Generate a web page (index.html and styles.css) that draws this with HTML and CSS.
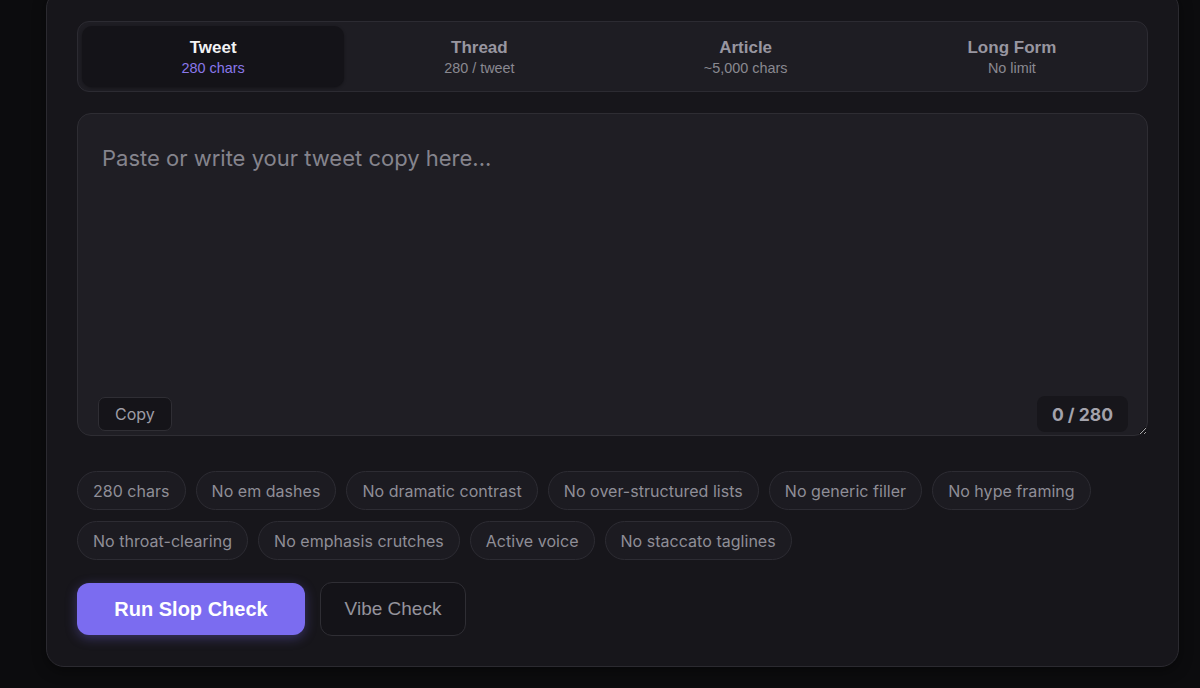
FILE: index.html
```html
<!DOCTYPE html>
<html>
<head>
<meta charset="utf-8">
<link rel="stylesheet" href="styles.css">
</head>
<body>
<div class="card">
  <div class="tabs">
    <button class="tab active"><span class="tab-title">Tweet</span><span class="tab-sub">280 chars</span></button>
    <button class="tab"><span class="tab-title">Thread</span><span class="tab-sub">280 / tweet</span></button>
    <button class="tab"><span class="tab-title">Article</span><span class="tab-sub">~5,000 chars</span></button>
    <button class="tab"><span class="tab-title">Long Form</span><span class="tab-sub">No limit</span></button>
  </div>
  <div class="editor">
    <textarea class="input" placeholder="Paste or write your tweet copy here..."></textarea>
    <button class="copy">Copy</button>
    <span class="count">0 / 280</span>
  </div>
  <div class="chips">
    <span class="chip">280 chars</span>
    <span class="chip">No em dashes</span>
    <span class="chip">No dramatic contrast</span>
    <span class="chip">No over-structured lists</span>
    <span class="chip">No generic filler</span>
    <span class="chip">No hype framing</span>
    <span class="chip">No throat-clearing</span>
    <span class="chip">No emphasis crutches</span>
    <span class="chip">Active voice</span>
    <span class="chip">No staccato taglines</span>
  </div>
  <div class="actions">
    <button class="primary">Run Slop Check</button>
    <button class="secondary">Vibe Check</button>
  </div>
</div>
</body>
</html>
```
FILE: styles.css
```css
* { box-sizing: border-box; }
html, body { margin: 0; padding: 0; }
body {
  background: #0c0c0e;
  height: 688px;
  overflow: hidden;
  font-family: Inter, "Liberation Sans", sans-serif;
}
.card {
  margin-top: -10px;
  margin-left: 46px;
  width: 1133px;
  background: #17161b;
  border: 1px solid #2b2a30;
  border-radius: 18px;
  padding: 30px 30px 30px 30px;
  box-shadow: 0 4px 14px rgba(0,0,0,0.4);
}
.tabs {
  display: grid;
  grid-template-columns: repeat(4, 1fr);
  gap: 4px;
  padding: 4px;
  background: #1e1d23;
  border: 1px solid #2c2b32;
  border-radius: 12px;
}
.tab {
  display: flex;
  flex-direction: column;
  align-items: center;
  justify-content: center;
  height: 61px;
  background: transparent;
  border: none;
  border-radius: 10px;
  font-family: "Liberation Sans", Arial, sans-serif;
  padding: 2px 0 0 0;
  gap: 1px;
}
.tab.active {
  background: #141318;
  box-shadow: 0 1px 3px rgba(0,0,0,0.35);
}
.tab-title {
  font-size: 17px;
  font-weight: 700;
  color: #9896a0;
  line-height: 20px;
}
.tab-sub {
  font-size: 14.4px;
  color: #8a8991;
  line-height: 18px;
}
.tab.active .tab-title { color: #f2f2f4; }
.tab.active .tab-sub { color: #8a78ea; }
.editor {
  position: relative;
  margin-top: 21px;
}
.input {
  display: block;
  width: 100%;
  height: 323px;
  background: #1f1e24;
  border: 1px solid #2e2d33;
  border-radius: 14px;
  padding: 31px 24px 29px;
  font-family: Inter, "Liberation Sans", sans-serif;
  font-size: 22px;
  color: #e0e0e4;
  resize: vertical;
  outline: none;
}
.input::placeholder { color: #85848d; }
.copy {
  position: absolute;
  left: 21px;
  bottom: 5px;
  height: 34px;
  padding: 0 16px;
  background: #151419;
  border: 1px solid #2f2e34;
  border-radius: 7px;
  color: #9e9da6;
  font-family: Inter, "Liberation Sans", sans-serif;
  font-size: 16px;
}
.count {
  position: absolute;
  right: 20px;
  bottom: 4px;
  height: 36px;
  padding: 0 15px;
  display: flex;
  align-items: center;
  background: #17161b;
  border-radius: 8px;
  color: #a4a3ac;
  font-weight: 700;
  font-size: 17.5px;
}
.chips {
  display: flex;
  flex-wrap: wrap;
  gap: 11px 10px;
  margin-top: 35px;
}
.chip {
  height: 39px;
  display: inline-flex;
  align-items: center;
  padding: 0 15px;
  background: #1c1b21;
  border: 1px solid #2d2c33;
  border-radius: 999px;
  color: #8f8e97;
  font-size: 16px;
  letter-spacing: 0.03px;
}
.actions {
  display: flex;
  gap: 15px;
  margin-top: 22px;
  align-items: center;
}
.primary {
  height: 52px;
  width: 228px;
  background: #7b6cf0;
  border: none;
  border-radius: 12px;
  color: #ffffff;
  font-family: "Liberation Sans", Arial, sans-serif;
  font-weight: 700;
  font-size: 20px;
  box-shadow: 0 3px 12px rgba(123,108,240,0.35);
}
.secondary {
  height: 54px;
  width: 146px;
  background: #141318;
  border: 1px solid #2f2e34;
  border-radius: 12px;
  color: #94939c;
  font-family: "Liberation Sans", Arial, sans-serif;
  font-size: 19px;
}
```
